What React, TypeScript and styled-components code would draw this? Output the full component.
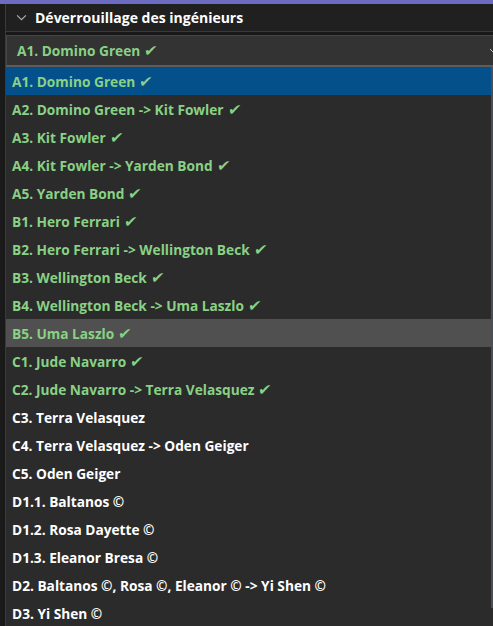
import React from 'react'
import styled, { createGlobalStyle } from 'styled-components'

const GlobalStyle = createGlobalStyle`
  html, body {
    margin: 0;
    padding: 0;
    background: #1e1e1e;
    overflow: hidden;
  }
  body {
    font-family: 'Open Sans', 'DejaVu Sans', sans-serif;
  }
`

const Page = styled.div`
  width: 493px;
  height: 626px;
  display: flex;
  flex-direction: column;
  overflow: hidden;
`

const TopBar = styled.div`
  height: 4px;
  background: #6c6cc0;
  flex-shrink: 0;
`

const Body = styled.div`
  flex: 1;
  display: flex;
  min-height: 0;
`

const Gutter = styled.div`
  width: 5px;
  background: #1a1a1a;
  border-right: 1px solid #3a3a3a;
  flex-shrink: 0;
`

const Panel = styled.div`
  flex: 1;
  display: flex;
  flex-direction: column;
  min-width: 0;
  overflow: hidden;
  background: #181818;
`

const Header = styled.div`
  height: 27px;
  display: flex;
  align-items: center;
  gap: 8px;
  padding-left: 10px;
  background: #202020;
  border-bottom: 1px solid #3a3a3a;
  flex-shrink: 0;
`

const Title = styled.span`
  color: #ffffff;
  font-weight: 700;
  font-size: 14px;
`

const SelectBox = styled.div`
  margin-top: 3px;
  height: 29px;
  display: flex;
  align-items: center;
  justify-content: space-between;
  padding-left: 10px;
  background: #333333;
  border-top: 1px solid #464646;
  border-left: 1px solid #464646;
  flex-shrink: 0;
`

const SelectArrow = styled.span`
  display: flex;
  margin-right: -6px;
`

const ListWrap = styled.div`
  flex: 1;
  display: flex;
  min-height: 0;
  background: #2b2b2b;
  border-top: 2px solid #5c5c5c;
`

const List = styled.div`
  flex: 1;
  display: flex;
  flex-direction: column;
  overflow: hidden;
`

type ItemProps = { $state?: 'selected' | 'hover' }

const Item = styled.div<ItemProps>`
  height: 28px;
  flex-shrink: 0;
  display: flex;
  align-items: center;
  padding-left: 6px;
  background: ${p =>
    p.$state === 'selected' ? '#04508a' : p.$state === 'hover' ? '#505050' : 'transparent'};
`

const Label = styled.span<{ $done?: boolean }>`
  color: ${p => (p.$done ? '#89d185' : '#ffffff')};
  font-weight: 700;
  font-size: 13.7px;
  white-space: nowrap;
`

const Check = styled.span`
  font-family: 'DejaVu Sans', sans-serif;
  font-weight: 400;
  font-size: 15.5px;
  line-height: 1;
  margin-left: 4px;
  display: inline-block;
  transform: skewX(-8deg);
`

const Scrollbar = styled.div`
  width: 2px;
  flex-shrink: 0;
  background: #2b2b2b;
`

const Thumb = styled.div`
  height: 541px;
  background: #4a4f55;
`

const Chevron = ({ color, size }: { color: string; size: number }) => (
  <svg width={size} height={size} viewBox="0 0 10 10" fill="none">
    <path d="M1 3 L5 7 L9 3" stroke={color} strokeWidth="1" />
  </svg>
)

const items: { text: string; done: boolean }[] = [
  { text: 'A1. Domino Green', done: true },
  { text: 'A2. Domino Green -> Kit Fowler', done: true },
  { text: 'A3. Kit Fowler', done: true },
  { text: 'A4. Kit Fowler -> Yarden Bond', done: true },
  { text: 'A5. Yarden Bond', done: true },
  { text: 'B1. Hero Ferrari', done: true },
  { text: 'B2. Hero Ferrari -> Wellington Beck', done: true },
  { text: 'B3. Wellington Beck', done: true },
  { text: 'B4. Wellington Beck -> Uma Laszlo', done: true },
  { text: 'B5. Uma Laszlo', done: true },
  { text: 'C1. Jude Navarro', done: true },
  { text: 'C2. Jude Navarro -> Terra Velasquez', done: true },
  { text: 'C3. Terra Velasquez', done: false },
  { text: 'C4. Terra Velasquez -> Oden Geiger', done: false },
  { text: 'C5. Oden Geiger', done: false },
  { text: 'D1.1. Baltanos ©', done: false },
  { text: 'D1.2. Rosa Dayette ©', done: false },
  { text: 'D1.3. Eleanor Bresa ©', done: false },
  { text: 'D2. Baltanos ©, Rosa ©, Eleanor © -> Yi Shen ©', done: false },
  { text: 'D3. Yi Shen ©', done: false },
]

export default function App() {
  return (
    <>
      <GlobalStyle />
      <Page>
        <TopBar />
        <Body>
          <Gutter />
          <Panel>
            <Header>
              <Chevron color="#b0b0b0" size={11} />
              <Title>Déverrouillage des ingénieurs</Title>
            </Header>
            <SelectBox>
              <Label $done>
                A1. Domino Green<Check>✔</Check>
              </Label>
              <SelectArrow>
                <Chevron color="#c0c0c0" size={10} />
              </SelectArrow>
            </SelectBox>
            <ListWrap>
              <List>
                {items.map((it, i) => (
                  <Item key={it.text} $state={i === 0 ? 'selected' : i === 9 ? 'hover' : undefined}>
                    <Label $done={it.done}>
                      {it.text}
                      {it.done && <Check>✔</Check>}
                    </Label>
                  </Item>
                ))}
              </List>
              <Scrollbar>
                <Thumb />
              </Scrollbar>
            </ListWrap>
          </Panel>
        </Body>
      </Page>
    </>
  )
}
